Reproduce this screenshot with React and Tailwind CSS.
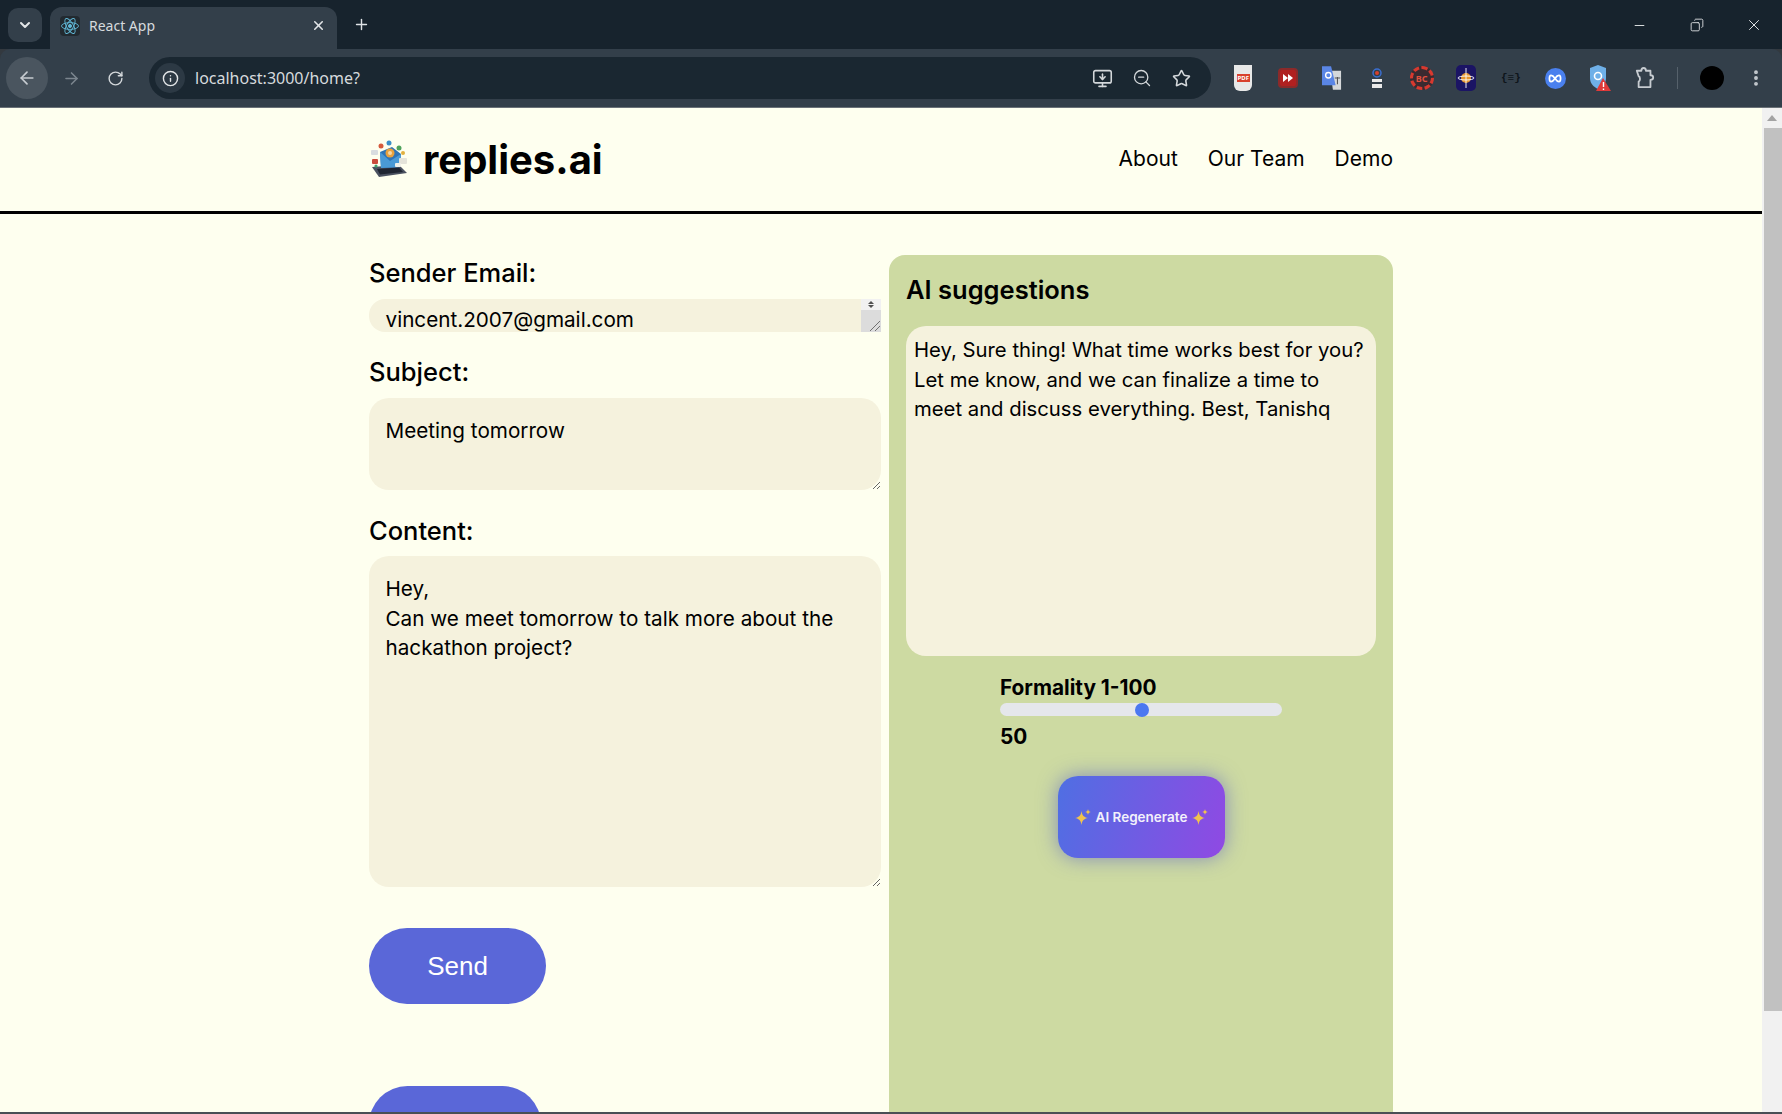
import { ChevronDown, X, Plus, Minus, ArrowLeft, ArrowRight, RotateCw, Info, MonitorDown, ZoomOut, Star, EllipsisVertical, Copy } from "lucide-react";

const FONT = "font-['Inter','Noto_Sans',sans-serif]";

function ReactIcon() {
  return (
    <svg viewBox="0 0 20 20" className="h-5 w-5 rounded-sm bg-[#222a30]" fill="none" stroke="#61b8d6" strokeWidth="0.9">
      <circle cx="10" cy="10" r="1.6" fill="#61b8d6" />
      <ellipse cx="10" cy="10" rx="8.5" ry="3.4" />
      <ellipse cx="10" cy="10" rx="8.5" ry="3.4" transform="rotate(60 10 10)" />
      <ellipse cx="10" cy="10" rx="8.5" ry="3.4" transform="rotate(120 10 10)" />
    </svg>
  );
}

function Logo() {
  return (
    <svg viewBox="0 0 40 40" className="h-[40px] w-[40px]">
      <path d="M3 28 L30 26 L38 34 L10 38 Z" fill="#4a5160" />
      <path d="M8 30 L30 28.5 L34 33 L11 35.5 Z" fill="#1f2532" />
      <path d="M11 13 L23 8 L32 15 L31 28 L12 29 Z" fill="#2f74b5" />
      <path d="M11 13 L21 22 L32 15 L31 28 L12 29 Z" fill="#4a9ad6" />
      <circle cx="21" cy="14" r="4.5" fill="#e8a13c" />
      <circle cx="21" cy="14" r="2" fill="#f6d9a8" />
      <rect x="2" y="11" width="7" height="5" rx="1" fill="#d9dde0" />
      <rect x="3" y="20" width="6" height="5" rx="1" fill="#c94b3c" />
      <rect x="30" y="19" width="8" height="6" rx="1" fill="#e5e4da" />
      <rect x="26" y="24" width="6" height="4" rx="1" fill="#f1f1ea" />
      <circle cx="12" cy="7" r="2.5" fill="#d65a3c" />
      <circle cx="20" cy="4" r="2.5" fill="#3a8fc9" />
      <circle cx="30" cy="9" r="2.5" fill="#4fa35d" />
      <circle cx="34" cy="14" r="2" fill="#e2b13e" />
      <circle cx="7" cy="27" r="1.6" fill="#3fa06c" />
    </svg>
  );
}

function ExtensionsPuzzle() {
  return (
    <svg viewBox="0 0 22 26" className="h-[24px] w-[20px]" fill="none" stroke="#c7ccd1" strokeWidth="2" strokeLinejoin="round">
      <path d="M2 5 H7 C7 1 12 1 12 5 H17 V10 C21 10 21 15 17 15 V23 H4 V17 C6 16 6 12 4 11 Z" />
    </svg>
  );
}

function Extensions() {
  return (
    <>
      <span className="flex w-[44.6px] justify-center">
        <span className="flex h-[26px] w-[18px] items-center justify-center rounded-b-md bg-[#e8e8e8]">
          <span className="bg-[#d8402c] px-[1px] text-[6px] font-bold leading-[8px] text-white">PDF</span>
        </span>
      </span>
      <span className="flex w-[44.6px] justify-center">
        <span className="flex h-[20px] w-[20px] items-center justify-center rounded-[4px] border-2 border-[#8b2a2a] bg-[#b02020]">
          <svg viewBox="0 0 12 12" className="h-3 w-3" fill="#fff"><path d="M1 2 L6 6 L1 10 Z M6 2 L11 6 L6 10 Z" /></svg>
        </span>
      </span>
      <span className="flex w-[44.6px] justify-center">
        <svg viewBox="0 0 22 26" className="h-[26px] w-[20px]">
          <path d="M9 5 H21 V26 H12 Z" fill="#d5d8da" />
          <path d="M0 0 H10 L15 21 H0 Z" fill="#5a86e6" />
          <circle cx="7" cy="10" r="3" fill="none" stroke="#fff" strokeWidth="1.5" />
          <path d="M14 13 H20 M17 12 V20" stroke="#555" strokeWidth="1.2" />
        </svg>
      </span>
      <span className="flex w-[44.6px] justify-center">
        <svg viewBox="0 0 12 24" className="h-[24px] w-[12px]">
          <circle cx="6" cy="7" r="4" fill="none" stroke="#3b6fd0" strokeWidth="1.5" />
          <circle cx="6" cy="7" r="2" fill="#d8402c" />
          <rect x="1" y="13" width="10" height="3" fill="#e9e9e9" />
          <rect x="1" y="18" width="10" height="4" fill="#e9e9e9" />
        </svg>
      </span>
      <span className="flex w-[44.6px] justify-center">
        <span className="flex h-[24px] w-[24px] items-center justify-center rounded-full border-[3px] border-dashed border-[#d8392f] bg-[#3a2a30] text-[9px] font-bold leading-none text-[#e0503f]">BC</span>
      </span>
      <span className="flex w-[44.6px] justify-center">
        <svg viewBox="0 0 20 26" className="h-[26px] w-[20px]">
          <rect width="20" height="26" rx="5" fill="#1b1464" />
          <circle cx="10" cy="13" r="5" fill="#e8962e" />
          <ellipse cx="10" cy="13" rx="8" ry="2" fill="none" stroke="#fff" strokeWidth="0.9" />
          <path d="M10 3 V23" stroke="#fff" strokeWidth="0.9" />
        </svg>
      </span>
      <span className="flex w-[44.6px] justify-center font-['Liberation_Mono',monospace] text-[11px] font-bold text-[#0e151b]">{"{≡}"}</span>
      <span className="flex w-[44.6px] justify-center">
        <span className="flex h-[21px] w-[21px] items-center justify-center rounded-full bg-[#4a80ee]">
          <svg viewBox="0 0 16 10" className="h-[9px] w-[14px]" fill="none" stroke="#fff" strokeWidth="2">
            <path d="M8 5 C6 2 4.5 1.5 3.5 1.5 C1 1.5 1 8.5 3.5 8.5 C4.5 8.5 6 8 8 5 C10 2 11.5 1.5 12.5 1.5 C15 1.5 15 8.5 12.5 8.5 C11.5 8.5 10 8 8 5 Z" />
          </svg>
        </span>
      </span>
      <span className="flex w-[44.6px] justify-center">
        <svg viewBox="0 0 22 28" className="h-[28px] w-[22px]">
          <path d="M1 4 L9 1 L17 4 V14 C17 20 13 23 9 25 C5 23 1 20 1 14 Z" fill="#6fb0e8" />
          <circle cx="9" cy="12" r="3.5" fill="none" stroke="#fff" strokeWidth="1.6" />
          <path d="M14 14 L22 27 H7 Z" fill="#e03a3a" />
          <path d="M14.5 18 V23 M14.5 24.5 V26" stroke="#fff" strokeWidth="1.4" />
        </svg>
      </span>
      <span className="flex w-[44.6px] justify-center">
        <ExtensionsPuzzle />
      </span>
    </>
  );
}

function BrowserChrome() {
  return (
    <div className="shrink-0 font-['Noto_Sans',sans-serif]">
      <div className="flex h-[49px] items-end bg-[#17232d] pl-[8px]">
        <div className="mb-[7px] flex h-[34px] w-[34px] items-center justify-center rounded-[10px] bg-[#333f4a] text-[#e3e6e8]">
          <ChevronDown className="h-4 w-4" strokeWidth={3} />
        </div>
        <div className="ml-[8px] flex h-[42px] w-[287px] items-center rounded-t-[12px] bg-[#333f4a] pb-[5px] pl-[10px] pr-[11px]">
          <ReactIcon />
          <span className="ml-[9px] flex-1 text-[14px] text-[#d6dadd]">React App</span>
          <X className="h-[15px] w-[15px] text-[#e3e6e8]" strokeWidth={2.5} />
        </div>
        <Plus className="mb-[16px] ml-[16px] h-[17px] w-[17px] text-[#dfe3e6]" strokeWidth={2} />
        <div className="mb-[15px] ml-auto flex items-center text-[#e3e6e8]">
          <span className="flex w-[57px] justify-center"><Minus className="h-[15px] w-[15px]" strokeWidth={1.5} /></span>
          <span className="flex w-[57px] justify-center"><Copy className="h-[14px] w-[14px] -scale-x-100" strokeWidth={1.5} /></span>
          <span className="flex w-[57px] justify-center"><X className="h-[18px] w-[18px]" strokeWidth={1.3} /></span>
        </div>
      </div>
      <div className="flex h-[59px] items-center rounded-tl-[10px] rounded-tr-[10px] border-b border-[#6a7177] bg-[#333f4a] pl-[6px]">
        <div className="flex h-[42px] w-[42px] items-center justify-center rounded-full bg-[#4a555f]">
          <ArrowLeft className="h-[20px] w-[20px] text-[#c7ccd1]" strokeWidth={2} />
        </div>
        <ArrowRight className="ml-[14px] h-[19px] w-[19px] text-[#7b858e]" strokeWidth={2} />
        <RotateCw className="ml-[26px] h-[17px] w-[17px] text-[#d4d8db]" strokeWidth={2} />
        <div className="ml-[25px] flex h-[42px] w-[1062px] items-center rounded-full bg-[#1a2731] pl-[6px] pr-[6px]">
          <div className="flex h-[30px] w-[30px] items-center justify-center rounded-full bg-[#2c3944]">
            <Info className="h-[17px] w-[17px] text-[#e3e6e8]" strokeWidth={2} />
          </div>
          <span className="ml-[10px] flex-1 text-[16px] text-[#d6dadd]">localhost:3000/home?</span>
          <MonitorDown className="h-[21px] w-[21px] text-[#d4d8db]" strokeWidth={1.8} />
          <ZoomOut className="ml-[19px] h-[20px] w-[20px] text-[#d4d8db]" strokeWidth={1.6} />
          <Star className="ml-[20px] mr-[14px] h-[19px] w-[19px] text-[#d4d8db]" strokeWidth={2} />
        </div>
        <div className="ml-[10px] flex items-center">
          <Extensions />
        </div>
        <div className="ml-[10px] h-[22px] w-px bg-[#56616b]" />
        <div className="ml-[22px] flex h-[24px] w-[24px] items-center justify-center rounded-full bg-black" />
        <EllipsisVertical className="ml-[22px] h-[20px] w-[20px] text-[#c7ccd1]" strokeWidth={2.6} />
      </div>
    </div>
  );
}

function Sparkle() {
  return (
    <svg viewBox="0 0 16 16" className="inline-block h-[16px] w-[16px]" fill="#f0c24e">
      <path d="M6.5 2 C7.2 6.5 8.8 8.2 13 9 C8.8 9.8 7.2 11.5 6.5 16 C5.8 11.5 4.2 9.8 0 9 C4.2 8.2 5.8 6.5 6.5 2 Z" />
      <path d="M13 0 C13.2 1.8 14.2 2.8 16 3 C14.2 3.2 13.2 4.2 13 6 C12.8 4.2 11.8 3.2 10 3 C11.8 2.8 12.8 1.8 13 0 Z" />
    </svg>
  );
}

const labelClass = "text-[25.5px] font-medium leading-[30px] text-black";
const fieldClass = "block w-[512px] bg-[#f5f2dd] px-[16.5px] text-[20.7px] leading-[29.6px] text-black outline-none";

export default function App() {
  return (
    <div className={`flex h-[1114px] flex-col overflow-hidden bg-[#33393f] ${FONT}`}>
      <BrowserChrome />
      <div className="flex min-h-0 flex-1">
        <main className="min-w-0 flex-1 overflow-hidden bg-[#feffef]">
          <header className="h-[106px] border-b-[3px] border-black">
            <div className="ml-[369px] flex h-full w-[1025px] items-center justify-between pb-[2px]">
              <div className="flex items-center">
                <Logo />
                <span className="ml-[14px] mt-[2px] text-[40px] font-bold leading-none text-black">replies.ai</span>
              </div>
              <nav className="mr-[1px] flex gap-[30px] text-[21px] text-black">
                <span>About</span>
                <span>Our Team</span>
                <span>Demo</span>
              </nav>
            </div>
          </header>
          <div className="ml-[369px] mt-[41px] flex w-[1025px] gap-[8px]">
            <section className="w-[512px]">
              <div className={`${labelClass} pt-[3px]`}>Sender Email:</div>
              <div className="relative mt-[11px] h-[33px] w-[512px]">
                <textarea readOnly defaultValue="vincent.2007@gmail.com" className={`${fieldClass} h-[33px] resize-none overflow-hidden rounded-[16px] pb-0 pt-[6px]`} />
                <div className="pointer-events-none absolute right-0 top-0 flex h-full w-[20px] flex-col">
                  <div className="flex h-[11px] flex-col items-center justify-center gap-[1px] bg-[#f1f1f1]">
                    <div className="h-0 w-0 border-x-[3px] border-b-[3px] border-x-transparent border-b-[#505050]" />
                    <div className="h-0 w-0 border-x-[3px] border-t-[3px] border-x-transparent border-t-[#505050]" />
                  </div>
                  <div className="flex flex-1 items-end justify-end bg-[#dcdcdc]">
                    <svg viewBox="0 0 12 12" className="h-[12px] w-[12px]" stroke="#707070" strokeWidth="1">
                      <path d="M1 11 L11 1 M6 11 L11 6" />
                    </svg>
                  </div>
                </div>
              </div>
              <div className={`${labelClass} mt-[25px]`}>Subject:</div>
              <textarea readOnly defaultValue="Meeting tomorrow" className={`${fieldClass} mt-[11px] h-[92px] rounded-[20px] py-[18px]`} />
              <div className={`${labelClass} mt-[26px]`}>Content:</div>
              <textarea readOnly defaultValue={"Hey,\nCan we meet tomorrow to talk more about the hackathon project?"} className={`${fieldClass} mt-[10px] h-[331px] rounded-[20px] py-[18px]`} />
              <button className="mt-[41px] block h-[76px] w-[177px] rounded-full bg-[#5a67d8] font-['Liberation_Sans',sans-serif] text-[26px] text-white">Send</button>
              <button className="mt-[82px] block h-[77px] w-[172px] rounded-full bg-[#5a67d8]" />
            </section>
            <aside className="h-[900px] w-[504px] rounded-[16px] bg-[#cddaa2] pl-[17px] pt-[19px]">
              <div className="text-[25.5px] font-semibold leading-[32px] text-black">AI suggestions</div>
              <div className="mt-[20px] h-[330px] w-[470px] rounded-[20px] bg-[#f5f2dd] px-[8px] py-[9px] text-[20.3px] leading-[29.6px] text-black">
                Hey, Sure thing! What time works best for you? Let me know, and we can finalize a time to meet and discuss everything. Best, Tanishq
              </div>
              <div className="ml-[94px] mt-[20px] w-[282px]">
                <div className="text-[20.8px] font-bold leading-[24px] text-black">Formality 1-100</div>
                <input
                  type="range"
                  min="1"
                  max="100"
                  defaultValue="51"
                  className="mt-[3px] block h-[13px] w-[282px] cursor-pointer appearance-none rounded-full bg-[#e5e7eb] [&::-webkit-slider-thumb]:h-[14px] [&::-webkit-slider-thumb]:w-[14px] [&::-webkit-slider-thumb]:appearance-none [&::-webkit-slider-thumb]:rounded-full [&::-webkit-slider-thumb]:bg-[#4b78f0]"
                />
                <div className="mt-[9px] text-[20.8px] font-bold leading-[24px] text-black">50</div>
              </div>
              <button className="ml-[152px] mt-[27px] flex h-[82px] w-[167px] items-center justify-center gap-[5px] rounded-[20px] bg-[linear-gradient(105deg,#4f6fe3,#9049e3)] text-[13.5px] font-semibold text-[#f3f1fb] shadow-[0_0_20px_rgba(80,90,200,0.6)]">
                <Sparkle />
                AI Regenerate
                <Sparkle />
              </button>
            </aside>
          </div>
        </main>
        <div className="flex w-[20px] shrink-0 flex-col bg-[#f1f1f1]">
          <div className="flex h-[20px] items-center justify-center">
            <div className="h-0 w-0 border-x-[5px] border-b-[6px] border-x-transparent border-b-[#a3a3a3]" />
          </div>
          <div className="h-[883px] w-[18px] self-end bg-[#c1c1c1]" />
        </div>
      </div>
      <div className="h-[2px] shrink-0 bg-[#4a4f55]" />
    </div>
  );
}
